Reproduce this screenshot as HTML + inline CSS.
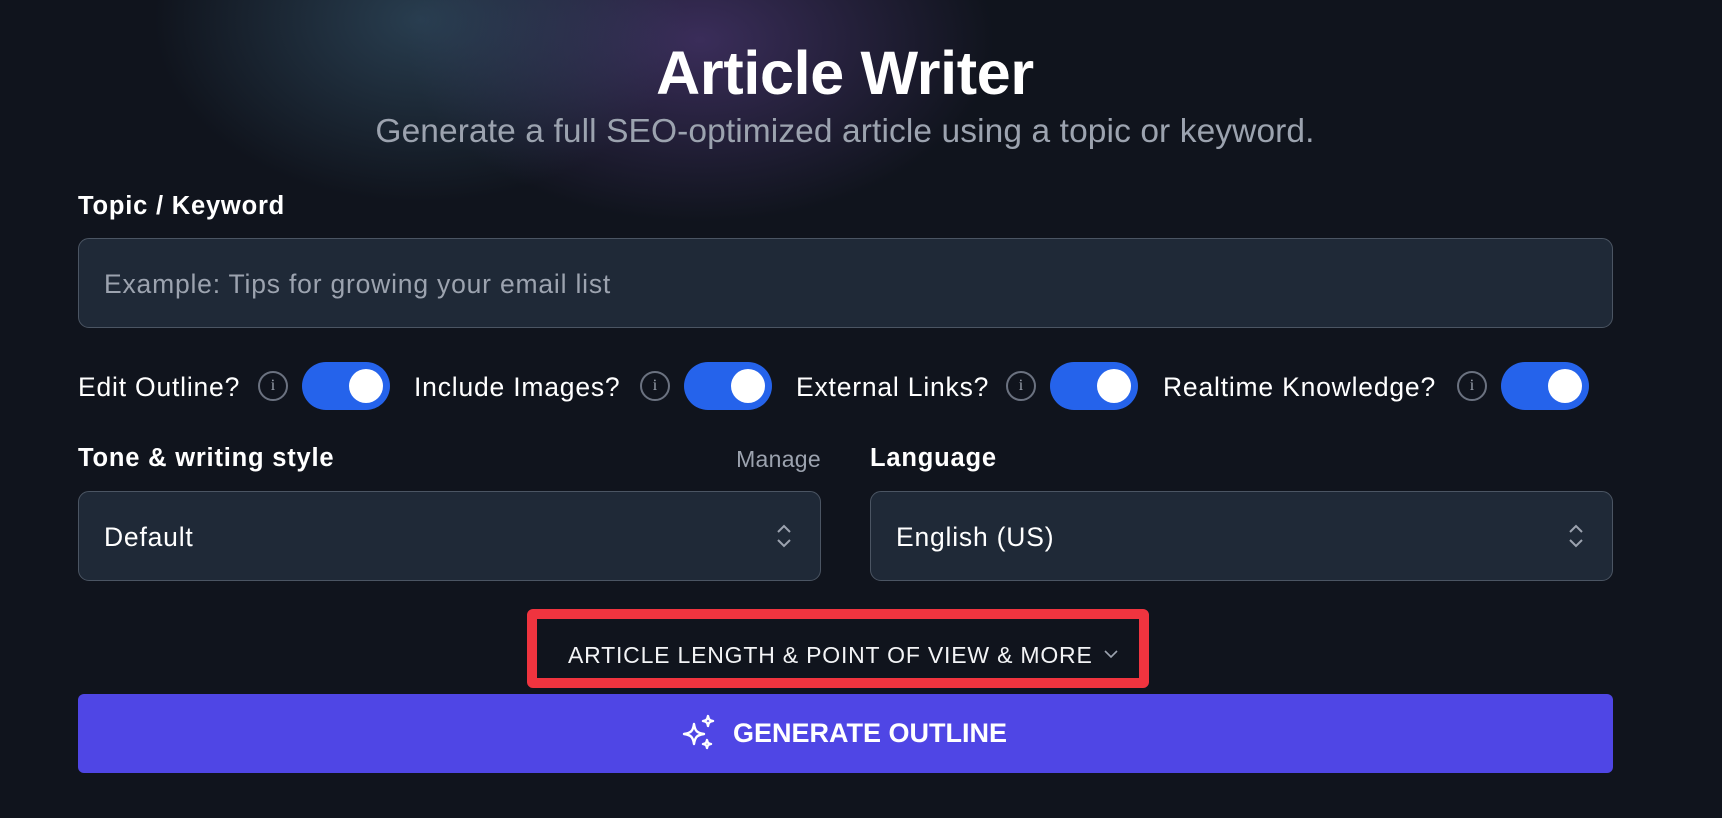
<!DOCTYPE html>
<html><head><meta charset="utf-8"><style>
*{box-sizing:border-box;margin:0;padding:0}
html,body{width:1722px;height:818px;overflow:hidden}
body{font-family:"Liberation Sans",sans-serif;color:#fff;position:relative;
background:
radial-gradient(ellipse 380px 260px at 420px 20px, rgba(60,95,120,0.55), transparent 70%),
radial-gradient(ellipse 420px 260px at 700px 40px, rgba(100,70,150,0.5), transparent 70%),
#10141d;}
.abs{position:absolute;white-space:nowrap}
h1{position:absolute;left:0;width:1690px;text-align:center;top:38px;font-size:61px;font-weight:700;letter-spacing:-0.3px}
.sub{left:0;width:1690px;text-align:center;top:113px;font-size:33.5px;color:#9ca3af;letter-spacing:0.1px}
.lbl{font-size:25.5px;font-weight:600;letter-spacing:0.8px}
.reg{font-size:26.5px;letter-spacing:0.8px}
.field{background:#1f2937;border:1.5px solid #4b5563;border-radius:11px}
.tog{width:88px;height:48px;border-radius:24px;background:#2563eb}
.tog::after{content:"";position:absolute;right:7px;top:7px;width:34px;height:34px;border-radius:50%;background:#fff}
.info{width:30px;height:30px;border:2px solid #6b7280;border-radius:50%;color:#9ca3af;font-size:16px;text-align:center;line-height:26px;font-family:"Liberation Serif",serif}
</style></head><body>
<h1>Article Writer</h1>
<div class="abs sub">Generate a full SEO-optimized article using a topic or keyword.</div>
<div class="abs lbl" style="left:78px;top:192px">Topic / Keyword</div>
<div class="abs field" style="left:78px;top:238px;width:1535px;height:90px"></div>
<div class="abs reg" style="left:104px;top:269px;color:#9ca3af">Example: Tips for growing your email list</div>

<div class="abs reg" style="left:78px;top:372px">Edit Outline?</div>
<div class="abs info" style="left:258px;top:371px">i</div>
<div class="abs tog" style="left:302px;top:362px"></div>
<div class="abs reg" style="left:414px;top:372px">Include Images?</div>
<div class="abs info" style="left:640px;top:371px">i</div>
<div class="abs tog" style="left:684px;top:362px"></div>
<div class="abs reg" style="left:796px;top:372px">External Links?</div>
<div class="abs info" style="left:1006px;top:371px">i</div>
<div class="abs tog" style="left:1050px;top:362px"></div>
<div class="abs reg" style="left:1163px;top:372px">Realtime Knowledge?</div>
<div class="abs info" style="left:1457px;top:371px">i</div>
<div class="abs tog" style="left:1501px;top:362px"></div>

<div class="abs lbl" style="left:78px;top:444px">Tone &amp; writing style</div>
<div class="abs" style="left:700px;top:446px;width:121px;text-align:right;font-size:23px;color:#9ca3af;letter-spacing:0.3px">Manage</div>
<div class="abs lbl" style="left:870px;top:444px">Language</div>
<div class="abs field" style="left:78px;top:491px;width:743px;height:90px"></div>
<div class="abs reg" style="left:104px;top:522px">Default</div>
<svg class="abs" style="left:774px;top:522px" width="20" height="28" viewBox="0 0 20 28"><path d="M4 10l6-6 6 6M4 18l6 6 6-6" fill="none" stroke="#9ca3af" stroke-width="2"/></svg>
<div class="abs field" style="left:870px;top:491px;width:743px;height:90px"></div>
<div class="abs reg" style="left:896px;top:522px">English (US)</div>
<svg class="abs" style="left:1566px;top:522px" width="20" height="28" viewBox="0 0 20 28"><path d="M4 10l6-6 6 6M4 18l6 6 6-6" fill="none" stroke="#9ca3af" stroke-width="2"/></svg>

<div class="abs" style="left:527px;top:609px;width:622px;height:79px;border:10px solid #f0343f;border-radius:6px"></div>
<div class="abs" style="left:568px;top:642px;font-size:23px;letter-spacing:0.8px;color:#f3f4f6">ARTICLE LENGTH &amp; POINT OF VIEW &amp; MORE</div>
<svg class="abs" style="left:1103px;top:648px" width="16" height="12" viewBox="0 0 16 12"><path d="M2 3l6 6 6-6" fill="none" stroke="#9ca3af" stroke-width="1.6"/></svg>

<div class="abs" style="left:78px;top:694px;width:1535px;height:79px;background:#4f46e5;border-radius:6px"></div>
<svg class="abs" style="left:680px;top:714px" width="38" height="38" viewBox="0 0 38 38" fill="none" stroke="#fff" stroke-width="2.4" stroke-linejoin="round"><path d="M14 10c1 7 3 9 10 10-7 1-9 3-10 10-1-7-3-9-10-10 7-1 9-3 10-10z"/><path d="M28 2c.6 3.5 1.5 4.4 5 5-3.5.6-4.4 1.5-5 5-.6-3.5-1.5-4.4-5-5 3.5-.6 4.4-1.5 5-5z"/><path d="M27 26c.5 2.8 1.2 3.5 4 4-2.8.5-3.5 1.2-4 4-.5-2.8-1.2-3.5-4-4 2.8-.5 3.5-1.2 4-4z"/></svg>
<div class="abs" style="left:733px;top:718px;font-size:27px;font-weight:700">GENERATE OUTLINE</div>
</body></html>
